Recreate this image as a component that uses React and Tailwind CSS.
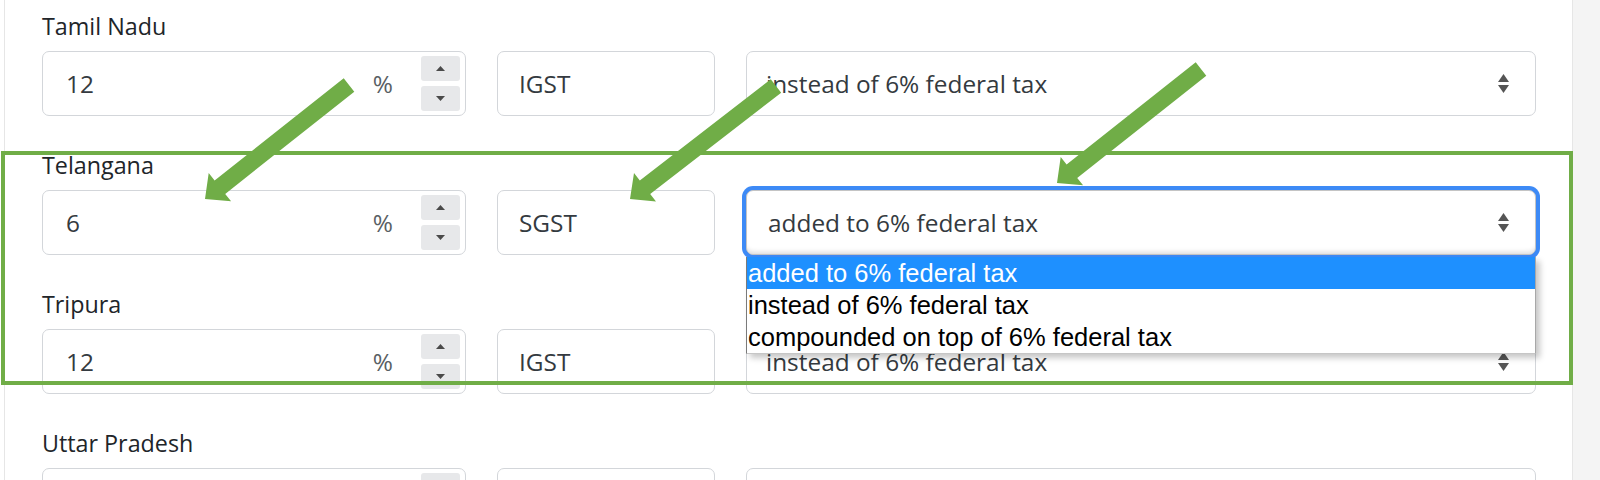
import React from "react";

const rows = [
  { name: "Tamil Nadu", rate: "12", type: "IGST", mode: "instead of 6% federal tax" },
  { name: "Telangana", rate: "6", type: "SGST", mode: "added to 6% federal tax", open: true },
  { name: "Tripura", rate: "12", type: "IGST", mode: "instead of 6% federal tax" },
  // values of the last row sit below the fold
  { name: "Uttar Pradesh", rate: "", type: "", mode: "" },
];

const options = [
  "added to 6% federal tax",
  "instead of 6% federal tax",
  "compounded on top of 6% federal tax",
];

// green callout arrows: tail -> tip
const arrows = [
  { tail: [349, 85], tip: [205, 199] },
  { tail: [776, 86], tip: [630, 199] },
  { tail: [1201, 69], tip: [1057, 183] },
];

function arrowPoints({ tail, tip }, w = 17, hw = 36, hl = 19) {
  const dx = tip[0] - tail[0];
  const dy = tip[1] - tail[1];
  const len = Math.hypot(dx, dy);
  const d = [dx / len, dy / len];
  const n = [-d[1], d[0]];
  const base = [tip[0] - d[0] * hl, tip[1] - d[1] * hl];
  const pt = (p, k) => `${(p[0] + n[0] * k).toFixed(1)},${(p[1] + n[1] * k).toFixed(1)}`;
  return [
    pt(tail, w / 2),
    pt(base, w / 2),
    pt(base, hw / 2),
    `${tip[0]},${tip[1]}`,
    pt(base, -hw / 2),
    pt(base, -w / 2),
    pt(tail, -w / 2),
  ].join(" ");
}

function Caret({ up }) {
  return (
    <svg width="9" height="5" viewBox="0 0 9 5">
      <polygon points={up ? "4.5,0 9,5 0,5" : "0,0 9,0 4.5,5"} fill="#4a4a4a" />
    </svg>
  );
}

function SelectArrows() {
  return (
    <svg width="11" height="19" viewBox="0 0 11 19">
      <polygon points="5.5,0 11,8 0,8" fill="#555" />
      <polygon points="0,11 11,11 5.5,19" fill="#555" />
    </svg>
  );
}

function Row({ row }) {
  return (
    <div className="flex flex-col mb-[33px]">
      <div className="text-[23.3px] leading-[32px] text-[#212529] mb-[9px]">{row.name}</div>
      <div className="grid grid-cols-[424px_218px_790px] gap-x-[31px] h-[65px]">
        <div className="flex items-center border border-[#d3d6da] rounded-[7px] bg-white pl-[23px] pr-[5px]">
          <span className="flex-1 text-[24.4px] leading-[32px] text-[#343a40]">{row.rate}</span>
          {row.rate && <span className="text-[24.4px] leading-[32px] text-[#5a5f64]">%</span>}
          <div className="flex flex-col gap-[5px] ml-[28px] w-[39px]">
            <div className="h-[25px] rounded-[3px] bg-[#e7e8ea] flex items-center justify-center">
              <Caret up />
            </div>
            <div className="h-[25px] rounded-[3px] bg-[#e7e8ea] flex items-center justify-center">
              <Caret />
            </div>
          </div>
        </div>
        <div className="flex items-center border border-[#d3d6da] rounded-[7px] bg-white pl-[21px]">
          <span className="text-[24.4px] leading-[32px] text-[#343a40]">{row.type}</span>
        </div>
        <div className="relative">
          <div
            className={
              row.open
                ? "h-full flex items-center border border-[#c4c4c4] rounded-[7px] bg-white pl-[21px] pr-[26px] shadow-[inset_0_-5px_5px_-3px_rgba(0,0,0,0.14),0_0_0_4px_#3d8af6]"
                : "h-full flex items-center border border-[#d3d6da] rounded-[7px] bg-white pl-[19px] pr-[26px]"
            }
          >
            <span className="flex-1 text-[24.4px] leading-[32px] text-[#343a40]">{row.mode}</span>
            <SelectArrows />
          </div>
          {row.open && (
            <ul className="absolute z-10 left-0 right-0 top-[calc(100%+2px)] bg-white border-l border-l-[#7a7a7a] border-r border-r-[#a8a8a8] border-b border-b-[#c6c6c6] shadow-[4px_4px_6px_rgba(0,0,0,0.22)] font-['Liberation_Sans',Arial,sans-serif] text-[25.5px] leading-[32px]">
              {options.map((o) => (
                <li
                  key={o}
                  className={
                    o === row.mode
                      ? "h-[32px] pl-[1px] bg-[#1e90ff] text-white"
                      : "h-[32px] pl-[1px] text-black"
                  }
                >
                  {o}
                </li>
              ))}
            </ul>
          )}
        </div>
      </div>
    </div>
  );
}

export default function App() {
  return (
    <div className="relative w-[1600px] h-[480px] overflow-hidden bg-white flex font-['Open_Sans',sans-serif]">
      <div className="w-[4px] bg-white" />
      <div className="w-[1569px] border-l border-r border-[#e6e6e6] bg-white pl-[37px] pt-[10px]">
        {rows.map((r) => (
          <Row key={r.name} row={r} />
        ))}
      </div>
      <div className="flex-1 bg-[#f4f4f4]" />

      {/* callout overlay */}
      <div className="absolute z-20 left-[1px] top-[151px] w-[1572px] h-[234px] border-[4px] border-[#70ad47] pointer-events-none" />
      <svg className="absolute z-30 left-0 top-0 pointer-events-none" width="1600" height="480" viewBox="0 0 1600 480">
        {arrows.map((a, i) => (
          <polygon key={i} points={arrowPoints(a)} fill="#70ad47" />
        ))}
      </svg>
    </div>
  );
}
